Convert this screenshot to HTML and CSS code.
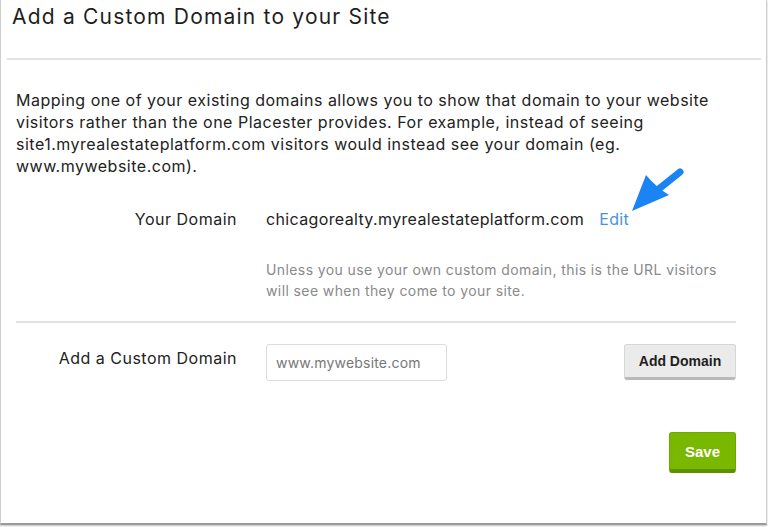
FILE: index.html
```html
<!DOCTYPE html>
<html>
<head>
<meta charset="utf-8">
<link rel="stylesheet" href="styles.css">
</head>
<body>
<div class="frame">
  <div class="header">
    <h1 class="title">Add a Custom Domain to your Site</h1>
  </div>
  <div class="content">
    <p class="intro">Mapping one of your existing domains allows you to show that domain to your website visitors rather than the one Placester provides. For example, instead of seeing site1.myrealestateplatform.com visitors would instead see your domain (eg. www.mywebsite.com).</p>
    <div class="row domain-row">
      <div class="label">Your Domain</div>
      <div class="value">
        <span class="domain">chicagorealty.myrealestateplatform.com</span><a class="edit" href="#">Edit</a>
      </div>
    </div>
    <div class="row help-row">
      <div></div>
      <p class="help">Unless you use your own custom domain, this is the URL visitors will see when they come to your site.</p>
    </div>
    <div class="divider"></div>
    <div class="row custom-row">
      <div class="label custom-label">Add a Custom Domain</div>
      <div class="field">
        <input class="input" type="text" placeholder="www.mywebsite.com">
        <button class="btn btn-gray">Add Domain</button>
      </div>
    </div>
    <div class="actions">
      <button class="btn btn-green">Save</button>
    </div>
  </div>
  <svg class="arrow" width="80" height="60" viewBox="620 160 80 60">
    <line x1="680" y1="172" x2="655" y2="192" stroke="#1a84f5" stroke-width="7" stroke-linecap="round"/>
    <path d="M632 211 L646 175 Q656 187 669 195 Z" fill="#1a84f5"/>
  </svg>
</div>
</body>
</html>
```
FILE: styles.css
```css
* { box-sizing: border-box; }
html, body { margin: 0; padding: 0; background: #fff; }
body {
  font-family: "Inter", "Noto Sans", sans-serif;
  color: #222;
  width: 768px;
  height: 527px;
  overflow: hidden;
}
.frame {
  position: relative;
  width: 767px;
  height: 525px;
  border: 1px solid #cfcfcf;
  border-top: none;
  border-bottom: 2px solid #9a9a9a;
  box-shadow: 0 1px 2px rgba(0,0,0,0.25);
  background: #fff;
}
.header {
  margin: 0 5px 0 6px;
  height: 60px;
  border-bottom: 2px solid #e2e2e2;
  padding: 3px 0 0 5px;
}
.title {
  margin: 0;
  font-size: 21px;
  font-weight: 400;
  line-height: 27px;
  color: #1e1e1e;
  letter-spacing: 1.2px;
}
.content {
  padding: 29px 30px 0 15px;
}
.intro {
  margin: 0;
  font-size: 16px;
  line-height: 22px;
  color: #222;
  letter-spacing: 0.5px;
}
.row {
  display: grid;
  grid-template-columns: 221px 1fr;
  column-gap: 29px;
}
.domain-row { margin-top: 31px; font-size: 16px; line-height: 22px; letter-spacing: 0.36px; }
.label { text-align: right; font-size: 16px; line-height: 22px; color: #222; letter-spacing: 0.5px; }
.domain { color: #222; }
.edit { color: #4a93d8; text-decoration: none; margin-left: 15px; }
.help-row { margin-top: 29px; }
.help {
  margin: 0;
  font-size: 14px;
  line-height: 21px;
  color: #8a8a8a;
  letter-spacing: 0.4px;
}
.divider {
  margin-top: 20px;
  height: 2px;
  background: #e2e2e2;
}
.custom-row { margin-top: 21px; }
.custom-label { padding-top: 3px; }
.field {
  display: flex;
  justify-content: space-between;
  align-items: flex-start;
}
.input {
  width: 181px;
  height: 37px;
  border: 1px solid #dcdcdc;
  border-radius: 3px;
  padding: 0 9px;
  font-family: "Inter", "Noto Sans", sans-serif;
  font-size: 14px;
  letter-spacing: 0.2px;
  color: #555;
  outline: none;
}
.input::placeholder { color: #777; }
.btn {
  font-family: "Liberation Sans", Arial, sans-serif;
  font-weight: 700;
  font-size: 14px;
  border-radius: 3px;
  cursor: pointer;
  padding: 0;
}
.btn-gray {
  width: 112px;
  height: 36px;
  background: #ebebeb;
  color: #1e1e1e;
  border: 1px solid #d6d6d6;
  border-bottom: 3px solid #b9b9b9;
}
.actions {
  display: flex;
  justify-content: flex-end;
  margin-top: 51px;
}
.btn-green {
  width: 67px;
  height: 41px;
  background: #7ab800;
  color: #fff;
  border: 1px solid #6fa600;
  border-bottom: 4px solid #5f9000;
  font-size: 15px;
}
.arrow {
  position: absolute;
  left: 619px;
  top: 160px;
}
```
